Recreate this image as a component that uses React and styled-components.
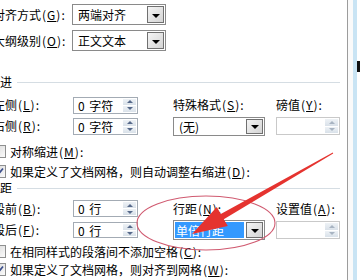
import React from 'react';
import styled, { createGlobalStyle } from 'styled-components';

const GlobalStyle = createGlobalStyle`
  html, body {
    margin: 0;
    padding: 0;
    background: #fff;
  }
  body {
    font-family: "Noto Sans CJK SC", "Liberation Sans", sans-serif;
    font-size: 12px;
    color: #000;
  }
`;

const Screen = styled.div`
  position: relative;
  display: flex;
  width: 360px;
  height: 280px;
  overflow: hidden;
  background: #fff;
`;

const Dialog = styled.div`
  flex: none;
  width: 354px;
  margin-left: -7px;
  padding-top: 4px;
  border-right: 1px solid #9c9c9c;
  background: #fff;
`;

const Edge = styled.div`
  flex: 1;
  padding-top: 61px;
  background: linear-gradient(to right, #fafafa 0 5px, #c9e4f4 5px 9px, #fff 9px);
`;

const DocMark = styled.div`
  width: 3px;
  height: 11px;
  margin-left: 9px;
  background: #111;
`;

const Grid = styled.div`
  display: grid;
  grid-template-columns: ${({ $cols }) => $cols};
  grid-auto-rows: ${({ $rows }) => $rows};
  row-gap: ${({ $gap }) => $gap}px;
  margin-top: ${({ $top }) => $top || 0}px;
  align-items: center;
`;

const Label = styled.div`
  white-space: nowrap;
  line-height: 14px;
`;

const AccKey = styled.span`
  letter-spacing: 1px;
  margin-left: 1px;

  u {
    text-decoration: underline;
  }
`;

const SelectBox = styled.div`
  display: flex;
  align-items: center;
  width: ${({ $w }) => $w}px;
  height: ${({ $h }) => $h}px;
  box-sizing: border-box;
  border: 1px solid #8a8a8a;
  background: #fff;
  padding: 1px;
`;

const SelectText = styled.div`
  flex: 1;
  align-self: stretch;
  display: flex;
  align-items: center;
  padding-left: ${({ $active }) => ($active ? 1 : 4)}px;
  margin-right: 2px;
  font-size: 12px;
  white-space: nowrap;
  color: ${({ $active }) => ($active ? '#fff' : '#000')};
  background: ${({ $active }) => ($active ? '#3399ff' : 'transparent')};
`;

const DropButton = styled.div`
  flex: none;
  width: 17px;
  align-self: stretch;
  box-sizing: border-box;
  border: 1px solid #707070;
  background: linear-gradient(135deg, #f4f4f4, #d4d4d4);
  display: flex;
  align-items: center;
  justify-content: center;

  &:after {
    content: '';
    margin-top: 2px;
    border-left: 4px solid transparent;
    border-right: 4px solid transparent;
    border-top: 4px solid #000;
  }
`;

const SpinBox = styled.div`
  display: flex;
  width: ${({ $w }) => $w || 65}px;
  height: ${({ $h }) => $h || 17}px;
  box-sizing: border-box;
  border: 1px solid ${({ $disabled }) => ($disabled ? '#c9c9c9' : '#a3abb4')};
  background: #fff;
  padding: 1px;
`;

const SpinText = styled.div`
  flex: 1;
  display: flex;
  align-items: center;
  padding-left: 3px;
  white-space: nowrap;
  word-spacing: 2px;
`;

const SpinButtons = styled.div`
  flex: none;
  width: 13px;
  display: flex;
  flex-direction: column;
  gap: 1px;
  background: #fff;
`;

const SpinHalf = styled.div`
  flex: 1;
  display: flex;
  align-items: center;
  justify-content: center;
  background: linear-gradient(#eef2f6, #d9e1e9);

  &:after {
    content: '';
    border-left: 3px solid transparent;
    border-right: 3px solid transparent;
    ${({ $down, $disabled }) =>
      $down
        ? `border-top: 3px solid ${$disabled ? '#a8b4c2' : '#56698a'};`
        : `border-bottom: 3px solid ${$disabled ? '#a8b4c2' : '#56698a'};`}
  }
`;

const Heading = styled.div`
  display: flex;
  align-items: center;
  gap: 5px;
  height: 14px;
  margin-top: ${({ $top }) => $top}px;
  margin-left: -5px;
  margin-right: 7px;
  line-height: 14px;

  &:after {
    content: '';
    flex: 1;
    height: 1px;
    background: #d5dde3;
  }
`;

const CheckRow = styled.div`
  display: flex;
  align-items: center;
  gap: 4px;
  height: 14px;
  margin-top: ${({ $top }) => $top}px;
  white-space: nowrap;
`;

const Box = styled.div`
  flex: none;
  width: 13px;
  height: 13px;
  box-sizing: border-box;
  border: 1px solid #8e8f8f;
  background: linear-gradient(135deg, #d8d8d8, #fbfbfb);
  display: flex;
  align-items: center;
  justify-content: center;
`;

const Overlay = styled.svg`
  position: absolute;
  left: 0;
  top: 0;
  pointer-events: none;
`;

const Select = ({ w, h, text, active }) => (
  <SelectBox $w={w} $h={h}>
    <SelectText $active={active}>{text}</SelectText>
    <DropButton />
  </SelectBox>
);

const Spin = ({ text, disabled, w, h }) => (
  <SpinBox $disabled={disabled} $w={w} $h={h}>
    <SpinText>{text}</SpinText>
    <SpinButtons>
      <SpinHalf $disabled={disabled} />
      <SpinHalf $down $disabled={disabled} />
    </SpinButtons>
  </SpinBox>
);

const Check = ({ checked, children, top }) => (
  <CheckRow $top={top}>
    <Box>
      {checked && (
        <svg width="9" height="9" viewBox="0 0 9 9">
          <path d="M1 4.5 L3.5 7 L8 1.5" fill="none" stroke="#3c4f8c" strokeWidth="1.7" />
        </svg>
      )}
    </Box>
    <span>{children}</span>
  </CheckRow>
);

const Acc = ({ k }) => (
  <AccKey>
    (<u>{k}</u>):
  </AccKey>
);

const cols = '80px 100px 103px 64px';

const App = () => (
  <Screen>
    <GlobalStyle />
    <Dialog>
      <Grid $cols="79px 94px" $rows="21px" $gap={5}>
        <Label>对齐方式<Acc k="G" /></Label>
        <Select w={94} h={21} text="两端对齐" />
        <Label>大纲级别<Acc k="O" /></Label>
        <Select w={94} h={21} text="正文文本" />
      </Grid>

      <Heading $top={24}>缩进</Heading>

      <Grid $cols={cols} $rows="18px" $gap={3} $top={7}>
        <Label>左侧<Acc k="L" /></Label>
        <Spin text="0 字符" />
        <Label>特殊格式<Acc k="S" /></Label>
        <Label>磅值<Acc k="Y" /></Label>
        <Label>右侧<Acc k="R" /></Label>
        <Spin text="0 字符" />
        <Select w={92} h={19} text="(无)" />
        <Spin w={64} h={18} text="" disabled />
      </Grid>

      <Check top={9}>对称缩进<Acc k="M" /></Check>
      <Check top={6} checked>如果定义了文档网格，则自动调整右缩进<Acc k="D" /></Check>

      <Heading $top={3}>间距</Heading>

      <Grid $cols={cols} $rows="17px 20px" $gap={3} $top={5}>
        <Label>段前<Acc k="B" /></Label>
        <Spin text="0 行" />
        <Label>行距<Acc k="N" /></Label>
        <Label>设置值<Acc k="A" /></Label>
        <Label>段后<Acc k="F" /></Label>
        <Spin text="0 行" h={16} />
        <Select w={92} h={20} text="单倍行距" active />
        <Spin w={64} h={18} text="" disabled />
      </Grid>

      <Check top={4}>在相同样式的段落间不添加空格<Acc k="C" /></Check>
      <Check top={4} checked>如果定义了文档网格，则对齐到网格<Acc k="W" /></Check>
    </Dialog>
    <Edge>
      <DocMark />
    </Edge>

    <Overlay width="360" height="280" viewBox="0 0 360 280">
      <ellipse cx="206" cy="223" rx="69" ry="27" fill="none" stroke="#d05a70" strokeWidth="1.1" />
      <polygon
        points="332.8,152.6 220.8,214 216.8,207.1 192,234 227.8,226.1 223.8,219.2 333.2,153.4"
        fill="#e5332f"
      />
    </Overlay>
  </Screen>
);

export default App;
